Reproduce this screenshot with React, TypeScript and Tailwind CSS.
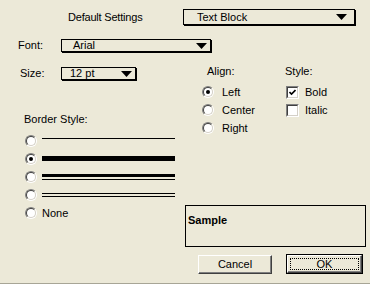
import React from 'react';

function Arrow() {
  return (
    <svg width="11" height="6" viewBox="0 0 11 6" className="shrink-0">
      <polygon points="0,0 11,0 5.5,6" fill="#000" />
    </svg>
  );
}

function Popup({ label, className, textPad }: { label: string; className: string; textPad: string }) {
  return (
    <div className={`flex items-center justify-between border border-black shadow-[1px_1px_0_#000] ${className}`}>
      <span className={`leading-[13px] ${textPad}`}>{label}</span>
      <Arrow />
    </div>
  );
}

function Radio({ checked }: { checked?: boolean }) {
  return (
    <span className="relative inline-block w-[12px] h-[12px] shrink-0 rounded-full border border-t-[#808080] border-l-[#808080] border-b-white border-r-white">
      <span className="absolute inset-0 rounded-full border border-t-[#404040] border-l-[#404040] border-b-[#D4D0C8] border-r-[#D4D0C8] bg-white" />
      {checked && <span className="absolute left-[3px] top-[3px] w-[4px] h-[4px] rounded-full bg-black" />}
    </span>
  );
}

function Check({ checked }: { checked?: boolean }) {
  return (
    <span className="relative inline-block w-[13px] h-[13px] shrink-0 border border-t-[#808080] border-l-[#808080] border-b-white border-r-white">
      <span className="absolute inset-0 border border-t-[#404040] border-l-[#404040] border-b-[#D4D0C8] border-r-[#D4D0C8] bg-white" />
      {checked && (
        <svg width="7" height="7" viewBox="0 0 7 7" className="absolute left-[2px] top-[2px]">
          <path d="M0.5 3 L2.5 5 L6.5 1" stroke="#000" strokeWidth="1.6" fill="none" />
        </svg>
      )}
    </span>
  );
}

export default function App() {
  return (
    <div className="w-[370px] h-[284px] bg-[#ECE9D8] border-b border-[#A7A596] text-black text-[11px] leading-[13px] font-['Liberation_Sans',Arial,sans-serif] overflow-hidden">
      {/* top row */}
      <div className="flex items-center pt-[9px]">
        <span className="ml-[68px] w-[115px] tracking-[-0.2px]">Default Settings</span>
        <Popup label="Text Block" className="w-[172px] h-[16px] pr-[7px]" textPad="pl-[13px]" />
      </div>

      {/* font row */}
      <div className="flex items-center mt-[14px]">
        <span className="ml-[18px] w-[43px]">Font:</span>
        <Popup label="Arial" className="w-[150px] h-[13px] pr-[3px]" textPad="pl-[11px]" />
      </div>

      <div className="flex mt-[15px]">
        {/* left column */}
        <div className="w-[185px] shrink-0">
          <div className="flex items-center h-[13px]">
            <span className="ml-[20px] w-[41px]">Size:</span>
            <Popup label="12 pt" className="w-[75px] h-[13px] pr-[3px]" textPad="pl-[8px]" />
          </div>

          <div className="ml-[24px] mt-[33px]">Border Style:</div>

          <div className="mt-[6px] ml-[25px] flex flex-col">
            <div className="flex items-center h-[18px] gap-[5px]">
              <Radio />
              <div className="w-[133px] h-[1px] bg-black mb-[5px]" />
            </div>
            <div className="flex items-center h-[18px] gap-[5px]">
              <Radio checked />
              <div className="w-[133px] h-[5px] bg-black mb-[1px]" />
            </div>
            <div className="flex items-center h-[18px] gap-[5px]">
              <Radio />
              <div className="w-[133px] flex flex-col gap-[2px]">
                <div className="h-[3px] bg-black" />
                <div className="h-[1px] bg-black" />
              </div>
            </div>
            <div className="flex items-center h-[18px] gap-[5px]">
              <Radio />
              <div className="w-[133px] flex flex-col gap-[2px]">
                <div className="h-[1px] bg-black" />
                <div className="h-[1px] bg-black" />
              </div>
            </div>
            <div className="flex items-center h-[18px] gap-[5px]">
              <Radio />
              <span>None</span>
            </div>
          </div>
        </div>

        {/* right column */}
        <div className="flex-1 -mt-[2px]">
          <div className="flex">
            <div className="ml-[22px] w-[78px]">
              <div>Align:</div>
              <div className="mt-[5px] flex flex-col">
                <div className="flex items-center h-[18px] gap-[8px] -ml-[5px]">
                  <Radio checked />
                  <span>Left</span>
                </div>
                <div className="flex items-center h-[18px] gap-[8px] -ml-[5px]">
                  <Radio />
                  <span>Center</span>
                </div>
                <div className="flex items-center h-[18px] gap-[8px] -ml-[5px]">
                  <Radio />
                  <span>Right</span>
                </div>
              </div>
            </div>
            <div>
              <div>Style:</div>
              <div className="mt-[5px] flex flex-col">
                <div className="flex items-center h-[18px] gap-[6px] ml-[1px]">
                  <Check checked />
                  <span>Bold</span>
                </div>
                <div className="flex items-center h-[18px] gap-[6px] ml-[1px]">
                  <Check />
                  <span>Italic</span>
                </div>
              </div>
            </div>
          </div>

          <div className="mt-[68px] w-[181px] h-[42px] border border-black pl-[2px] pt-[8px] font-bold">Sample</div>

          <div className="flex items-start mt-[7px]">
            <button className="mt-[1px] ml-[13px] w-[74px] h-[19px] border border-t-white border-l-white border-b-[#404040] border-r-[#404040] shadow-[inset_-1px_-1px_0_#808080] text-[11px] leading-[13px]">
              Cancel
            </button>
            <div className="ml-[14px] w-[77px] h-[20px] border border-black">
              <div className="w-full h-full border border-t-white border-l-white border-b-[#404040] border-r-[#404040] shadow-[inset_-1px_-1px_0_#808080] p-[2px]">
                <div className="w-full h-full border border-dotted border-black flex items-center justify-center">
                  OK
                </div>
              </div>
            </div>
          </div>
        </div>
      </div>
    </div>
  );
}
